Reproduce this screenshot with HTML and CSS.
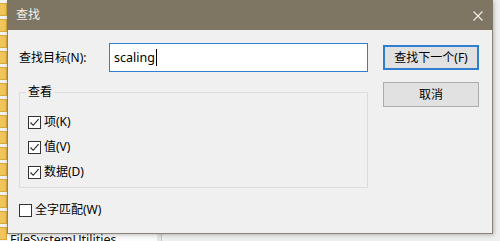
FILE: index.html
```html
<!DOCTYPE html>
<html lang="zh-CN">
<head>
<meta charset="utf-8">
<title>查找</title>
<link rel="stylesheet" href="styles.css">
</head>
<body>
<div class="screen">
  <div class="backdrop">
    <div class="folders">
      <span class="folder"></span><span class="folder"></span><span class="folder"></span>
      <span class="folder"></span><span class="folder"></span><span class="folder"></span>
      <span class="folder"></span><span class="folder"></span><span class="folder"></span>
      <span class="folder"></span><span class="folder"></span><span class="folder"></span>
      <span class="folder"></span><span class="folder"></span><span class="folder"></span>
    </div>
    <div class="pane-left">
      <div class="file-row">FileSystemUtilities</div>
    </div>
    <div class="splitter"></div>
    <div class="pane-right"></div>
  </div>

  <div class="dialog">
    <div class="titlebar">
      <span class="title">查找</span>
      <svg class="close" width="10" height="10" viewBox="0 0 10 10"><path d="M0.5 0.5 L9.5 9.5 M9.5 0.5 L0.5 9.5" stroke="#f2f0ea" stroke-width="1.1" fill="none"/></svg>
    </div>
    <div class="content">
      <div class="main">
        <div class="left">
          <div class="find-row">
            <span class="find-label">查找目标(N):</span>
            <div class="input">scaling<span class="caret"></span></div>
          </div>
          <fieldset class="group">
            <legend>查看</legend>
            <div class="check-list">
              <div class="check"><span class="box"><svg width="11" height="11" viewBox="0 0 11 11"><path d="M1.5 5.5 L4.2 8.3 L9.6 2.2" stroke="#222" stroke-width="1.1" fill="none"/></svg></span>项(K)</div>
              <div class="check"><span class="box"><svg width="11" height="11" viewBox="0 0 11 11"><path d="M1.5 5.5 L4.2 8.3 L9.6 2.2" stroke="#222" stroke-width="1.1" fill="none"/></svg></span>值(V)</div>
              <div class="check"><span class="box"><svg width="11" height="11" viewBox="0 0 11 11"><path d="M1.5 5.5 L4.2 8.3 L9.6 2.2" stroke="#222" stroke-width="1.1" fill="none"/></svg></span>数据(D)</div>
            </div>
          </fieldset>
        </div>
        <div class="buttons">
          <button class="btn btn-default">查找下一个(F)</button>
          <button class="btn">取消</button>
        </div>
      </div>
      <div class="check whole"><span class="box"></span>全字匹配(W)</div>
    </div>
  </div>
</div>
</body>
</html>
```

FILE: styles.css
```css
* { box-sizing: border-box; }
html, body { margin: 0; padding: 0; }
body {
  width: 500px;
  height: 241px;
  overflow: hidden;
  font-family: "Noto Sans", "Noto Sans CJK SC", sans-serif;
  font-size: 12px;
  color: #000;
  background: #f0f0f0;
}
.screen {
  position: relative;
  width: 500px;
  height: 241px;
  overflow: hidden;
}
.backdrop {
  display: flex;
  height: 241px;
}
.folders {
  width: 7px;
  display: flex;
  flex-direction: column;
  background: #f4f4f4;
}
.folder {
  display: block;
  height: 16px;
  padding-top: 3px;
}
.folder::before {
  content: "";
  display: block;
  width: 6px;
  height: 11px;
  background: #f0c65a;
  border: 1px solid #d8a93a;
  border-left: 0;
}
.pane-left {
  width: 150px;
  background: #fbfbfb;
  display: flex;
  flex-direction: column;
  justify-content: flex-end;
}
.file-row {
  height: 16px;
  line-height: 16px;
  padding-left: 3px;
  margin-bottom: -7px;
  font-size: 12.5px;
  color: #111;
}
.splitter {
  width: 5px;
  background: #e6e6e6;
  border-right: 1px solid #c8c8c8;
}
.pane-right {
  flex: 1;
  background: #efefef;
}

.dialog {
  position: absolute;
  left: 7px;
  top: 0;
  width: 486px;
  height: 234px;
  background: #f0f0f0;
  border: 1px solid #8a8476;
  border-top: 0;
  box-shadow: 1px 1px 4px rgba(0,0,0,0.25);
  display: flex;
  flex-direction: column;
}
.titlebar {
  height: 30px;
  background: #7e7563;
  display: flex;
  align-items: center;
  justify-content: space-between;
  padding: 0 10px 0 8px;
  margin: 0 -1px;
}
.title {
  color: #f4f1ea;
  font-size: 12px;
  line-height: 16px;
  padding-left: 1px;
}
.close { display: block; margin-top: 1px; }

.content {
  padding: 13px 0 0 11px;
  display: flex;
  flex-direction: column;
}
.main {
  display: flex;
  gap: 15px;
}
.left {
  width: 349px;
  display: flex;
  flex-direction: column;
}
.find-row {
  display: flex;
  align-items: center;
  height: 29px;
}
.find-label {
  width: 90px;
  line-height: 16px;
}
.input {
  width: 259px;
  height: 29px;
  background: #fff;
  border: 1px solid #2f7fd0;
  padding-left: 4px;
  display: flex;
  align-items: center;
  font-size: 12.5px;
  line-height: 16px;
}
.caret {
  display: inline-block;
  width: 1px;
  height: 17px;
  background: #000;
  margin-left: 1px;
}
.group {
  margin: 12px 0 0 0;
  padding: 0 0 0 8px;
  height: 104px;
  border: 1px solid #dcdcdc;
  min-width: 0;
}
.group legend {
  margin-left: -2px;
  padding: 0 2px;
  line-height: 16px;
  font-size: 12px;
}
.check-list {
  display: flex;
  flex-direction: column;
  gap: 1px;
  padding-top: 10px;
}
.check {
  display: flex;
  align-items: center;
  height: 24px;
  line-height: 16px;
}
.box {
  width: 13px;
  height: 13px;
  border: 1px solid #333;
  background: #fff;
  margin-right: 3px;
  display: flex;
  align-items: center;
  justify-content: center;
  flex: none;
}
.box svg { display: block; }
.whole {
  margin-top: 10px;
}
.buttons {
  width: 96px;
  padding-top: 2px;
  display: flex;
  flex-direction: column;
  gap: 12px;
}
.btn {
  width: 96px;
  height: 25px;
  background: #e1e1e1;
  border: 1px solid #adadad;
  font-family: inherit;
  font-size: 12px;
  color: #000;
  padding: 0;
  line-height: 16px;
}
.btn-default {
  border: 2px solid #2f7fd0;
}
```
